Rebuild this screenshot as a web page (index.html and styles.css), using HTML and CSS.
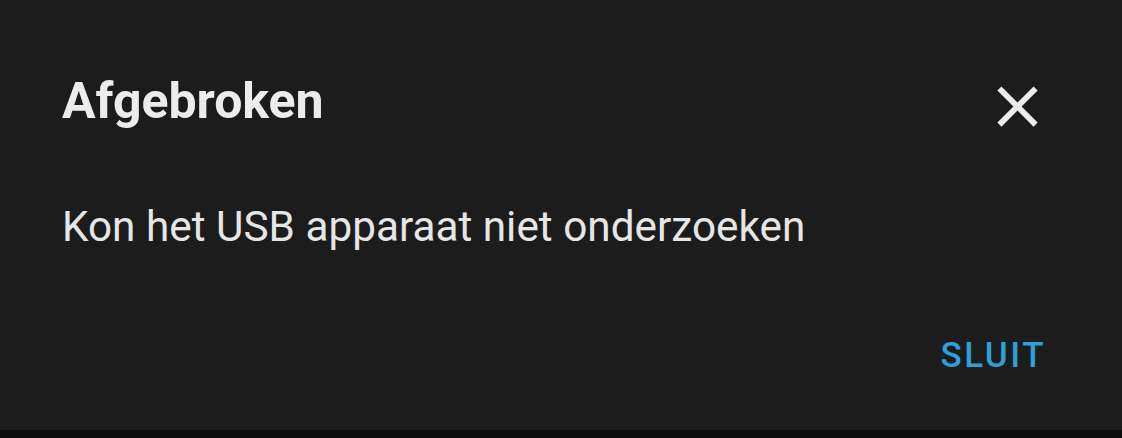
FILE: index.html
```html
<!DOCTYPE html>
<html>
<head>
<meta charset="utf-8">
<link rel="stylesheet" href="styles.css">
</head>
<body>
<div class="dialog">
  <div class="header">
    <h1 class="title">Afgebroken</h1>
    <button class="close" aria-label="Sluiten">
      <svg viewBox="0 0 24 24" width="69" height="69"><path fill="#ececec" d="M19,6.41L17.59,5L12,10.59L6.41,5L5,6.41L10.59,12L5,17.59L6.41,19L12,13.41L17.59,19L19,17.59L13.41,12L19,6.41Z"/></svg>
    </button>
  </div>
  <p class="message">Kon het USB apparaat niet onderzoeken</p>
  <div class="actions">
    <button class="action">SLUIT</button>
  </div>
</div>
<div class="strip"></div>
</body>
</html>
```
FILE: styles.css
```css
html, body {
  margin: 0;
  padding: 0;
  background: #0b0b0b;
}
body {
  width: 1122px;
  height: 438px;
  overflow: hidden;
  font-family: Roboto, "Noto Sans", sans-serif;
}
.dialog {
  height: 430px;
  background: #1c1c1c;
  box-sizing: border-box;
  padding: 71px 0 0 62px;
}
.header {
  display: flex;
  align-items: center;
  justify-content: space-between;
  height: 60px;
}
.title {
  margin: 0;
  font-size: 50px;
  line-height: 60px;
  font-weight: 700;
  color: #ececec;
}
.close {
  background: none;
  border: none;
  padding: 0;
  margin: 10px 70px 0 0;
  display: flex;
  align-items: center;
}
.message {
  margin: 0;
  padding-top: 66px;
  font-size: 42.3px;
  line-height: 60px;
  color: #e6e6e6;
}
.actions {
  display: flex;
  justify-content: flex-end;
  padding-right: 76px;
  padding-top: 77px;
}
.action {
  background: none;
  border: none;
  padding: 0;
  font-family: Roboto, "Noto Sans", sans-serif;
  font-size: 35px;
  line-height: 44px;
  font-weight: 500;
  letter-spacing: 2.5px;
  color: #2e9fd9;
}
.strip {
  height: 8px;
  background: #0b0b0b;
}
```
